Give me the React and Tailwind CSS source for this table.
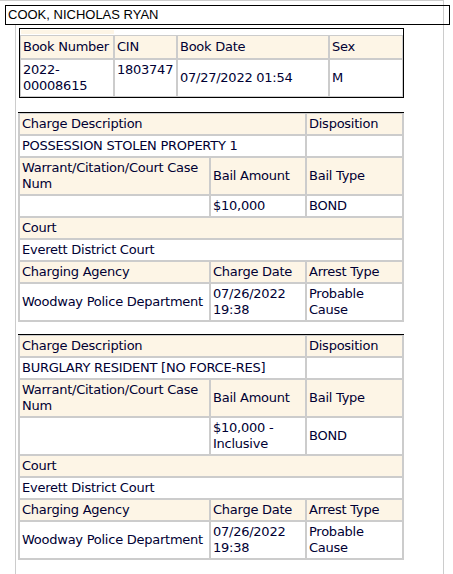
import React from 'react';

const cream = 'bg-[#fdf5e6]';

const charges = [
    {
        description: 'POSSESSION STOLEN PROPERTY 1',
        disposition: '',
        caseNum: '',
        bail: ['$10,000'],
        bailType: 'BOND',
        court: 'Everett District Court',
        agency: 'Woodway Police Department',
        chargeDate: ['07/26/2022', '19:38'],
        arrestType: ['Probable', 'Cause'],
    },
    {
        description: 'BURGLARY RESIDENT [NO FORCE-RES]',
        disposition: '',
        caseNum: '',
        bail: ['$10,000 -', 'Inclusive'],
        bailType: 'BOND',
        court: 'Everett District Court',
        agency: 'Woodway Police Department',
        chargeDate: ['07/26/2022', '19:38'],
        arrestType: ['Probable', 'Cause'],
    },
];

// one cell of a charge grid
const Cell = ({ head, span, children }) => (
    <div
        className={`flex items-center px-[2px] py-[2px] leading-[16px] ${head ? cream : 'bg-white'} ${span || ''}`}
    >
        <div>{children}</div>
    </div>
);

const Lines = ({ lines }) => lines.map((l, i) => <div key={i}>{l}</div>);

const ChargeTable = ({ charge }) => (
    <div className="w-[386px] border-t border-black">
        <div className="grid grid-cols-[189px_94px_95px] gap-[2px] bg-[#cccccc] px-[2px] pt-[1px] pb-[2px]">
            <Cell head span="col-span-2">Charge Description</Cell>
            <Cell head>Disposition</Cell>

            <Cell span="col-span-2">{charge.description}</Cell>
            <Cell>{charge.disposition}</Cell>

            <Cell head>
                <div>Warrant/Citation/Court Case</div>
                <div>Num</div>
            </Cell>
            <Cell head>Bail Amount</Cell>
            <Cell head>Bail Type</Cell>

            <Cell>{charge.caseNum}</Cell>
            <Cell><Lines lines={charge.bail} /></Cell>
            <Cell>{charge.bailType}</Cell>

            <Cell head span="col-span-3">Court</Cell>
            <Cell span="col-span-3">{charge.court}</Cell>

            <Cell head>Charging Agency</Cell>
            <Cell head>Charge Date</Cell>
            <Cell head>Arrest Type</Cell>

            <Cell>{charge.agency}</Cell>
            <Cell><Lines lines={charge.chargeDate} /></Cell>
            <Cell><Lines lines={charge.arrestType} /></Cell>
        </div>
    </div>
);

const BookTable = () => (
    <div className="w-[385px] border border-black bg-white">
        <div className="pt-[1px] pl-[1px]">
            <div className={`h-[4px] w-[93px] ${cream}`}></div>
        </div>
        <div className="mt-[1px] grid grid-cols-[92px_61px_150px_72px] gap-[2px] bg-[#cccccc] p-[1px]">
            <div className={`whitespace-nowrap px-[2px] py-[3px] leading-[16px] ${cream}`}>Book Number</div>
            <div className={`px-[2px] py-[3px] leading-[16px] ${cream}`}>CIN</div>
            <div className={`px-[2px] py-[3px] leading-[16px] ${cream}`}>Book Date</div>
            <div className={`px-[2px] py-[3px] leading-[16px] ${cream}`}>Sex</div>

            <div className="bg-white px-[2px] py-[2px] leading-[16px]">
                <div>2022-</div>
                <div>00008615</div>
            </div>
            <div className="bg-white px-[2px] py-[2px] leading-[16px]">1803747</div>
            <div className="flex items-center bg-white px-[2px] py-[2px] leading-[16px]">07/27/2022 01:54</div>
            <div className="flex items-center bg-white px-[2px] py-[2px] leading-[16px]">M</div>
        </div>
    </div>
);

export default function App() {
    return (
        <div className="relative min-h-[574px] w-[453px] overflow-hidden bg-white">
            <div className="min-h-[574px] w-[444px] border-t border-r border-[#cccccc] pt-[4px]">
                <div
                    className="ml-[5px] w-[445px] border border-black px-[2px] text-[13px] leading-[18px] text-black"
                    style={{ fontFamily: '"Liberation Sans", Arial, sans-serif' }}
                >
                    COOK, NICHOLAS RYAN
                </div>
                <div
                    className="ml-[15px] min-h-[549px] border-l border-[#cccccc] pl-[3px] pt-[3px] text-[13px] tracking-[-0.25px] text-[#000033]"
                    style={{ fontFamily: '"DejaVu Sans", Verdana, sans-serif' }}
                >
                    <BookTable />
                    <div className="mt-[14px] -ml-[1px]">
                        <ChargeTable charge={charges[0]} />
                    </div>
                    <div className="mt-[12px] -ml-[1px]">
                        <ChargeTable charge={charges[1]} />
                    </div>
                </div>
            </div>
        </div>
    );
}
